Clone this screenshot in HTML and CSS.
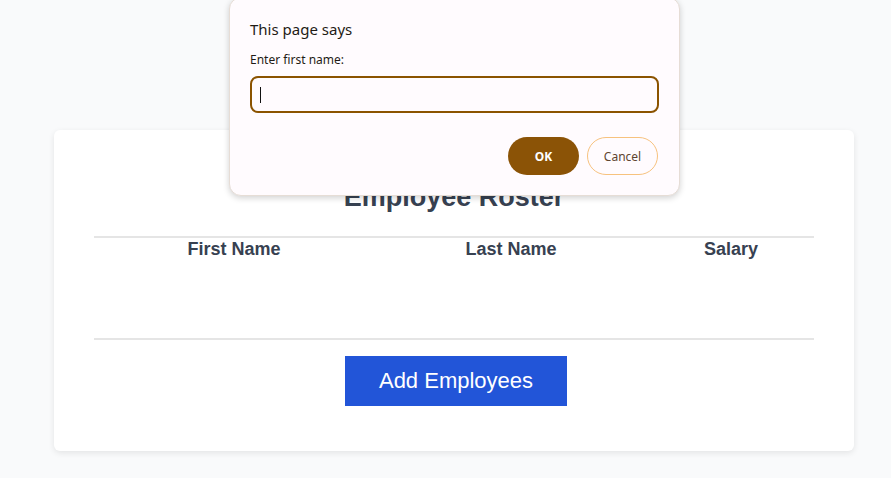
FILE: index.html
```html
<!DOCTYPE html>
<html>
<head>
<meta charset="utf-8">
<link rel="stylesheet" href="styles.css">
</head>
<body>
<main class="card">
  <h1 class="title">Employee Roster</h1>
  <div class="table">
    <div class="thead">
      <div class="th">First Name</div>
      <div class="th">Last Name</div>
      <div class="th">Salary</div>
    </div>
  </div>
  <div class="actions">
    <button class="add-btn">Add Employees</button>
  </div>
</main>

<div class="dialog">
  <div class="dialog-title">This page says</div>
  <div class="dialog-msg">Enter first name:</div>
  <div class="dialog-input"><span class="caret"></span></div>
  <div class="dialog-buttons">
    <button class="btn-ok">OK</button>
    <button class="btn-cancel">Cancel</button>
  </div>
</div>
</body>
</html>
```
FILE: styles.css
```css
html, body {
  margin: 0;
  padding: 0;
}
body {
  background: #f9fafb;
  font-family: "Liberation Sans", Arial, sans-serif;
  padding-top: 130px;
  height: 478px;
  box-sizing: border-box;
  overflow: hidden;
}
.card {
  width: 800px;
  margin-left: 54px;
  box-sizing: border-box;
  background: #fff;
  border-radius: 6px;
  box-shadow: 0 2px 6px rgba(0,0,0,0.09);
  padding: 50px 40px 45px;
  height: 321px;
}
.title {
  margin: 0 0 22px;
  text-align: center;
  font-size: 27px;
  line-height: 34px;
  font-weight: bold;
  color: #374151;
}
.table {
  border-top: 2px solid #e5e5e5;
  border-bottom: 2px solid #e5e5e5;
  height: 100px;
}
.thead {
  display: grid;
  grid-template-columns: 280px 274px 166px;
}
.th {
  text-align: center;
  font-size: 18px;
  font-weight: bold;
  color: #374151;
  line-height: 22px;
}
.actions {
  display: flex;
  justify-content: center;
  padding-top: 16px;
  padding-left: 4px;
}
.add-btn {
  width: 222px;
  height: 50px;
  border: none;
  background: #2255d8;
  color: #fff;
  font-family: "Liberation Sans", Arial, sans-serif;
  font-size: 22px;
  padding: 0;
}
.dialog {
  position: absolute;
  left: 229px;
  top: -3px;
  width: 451px;
  height: 199px;
  box-sizing: border-box;
  background: #fffbfe;
  border: 1px solid #e6ddd6;
  border-radius: 12px;
  box-shadow: 0 2px 6px rgba(0,0,0,0.18);
  padding: 21px 20px 0;
  font-family: "Noto Sans", "Open Sans", sans-serif;
  color: #1f1b16;
}
.dialog-title {
  font-size: 15px;
  line-height: 20px;
}
.dialog-msg {
  font-size: 12px;
  line-height: 16px;
  margin-top: 13px;
}
.dialog-input {
  margin-top: 8px;
  height: 37px;
  box-sizing: border-box;
  border: 2px solid #8b5300;
  border-radius: 8px;
  display: flex;
  align-items: center;
  padding-left: 8px;
}
.caret {
  width: 1px;
  height: 16px;
  background: #111;
}
.dialog-buttons {
  display: flex;
  justify-content: flex-end;
  gap: 8px;
  margin-top: 24px;
  margin-right: 1px;
}
.btn-ok {
  width: 71px;
  height: 38px;
  border: none;
  border-radius: 19px;
  background: #8b5306;
  color: #fff;
  font-family: "Noto Sans", "Open Sans", sans-serif;
  font-weight: bold;
  font-size: 12px;
}
.btn-cancel {
  width: 71px;
  height: 38px;
  border: 1px solid #f7c27e;
  border-radius: 19px;
  background: #fffbfe;
  color: #5e4530;
  font-family: "Noto Sans", "Open Sans", sans-serif;
  font-size: 12px;
}
```
